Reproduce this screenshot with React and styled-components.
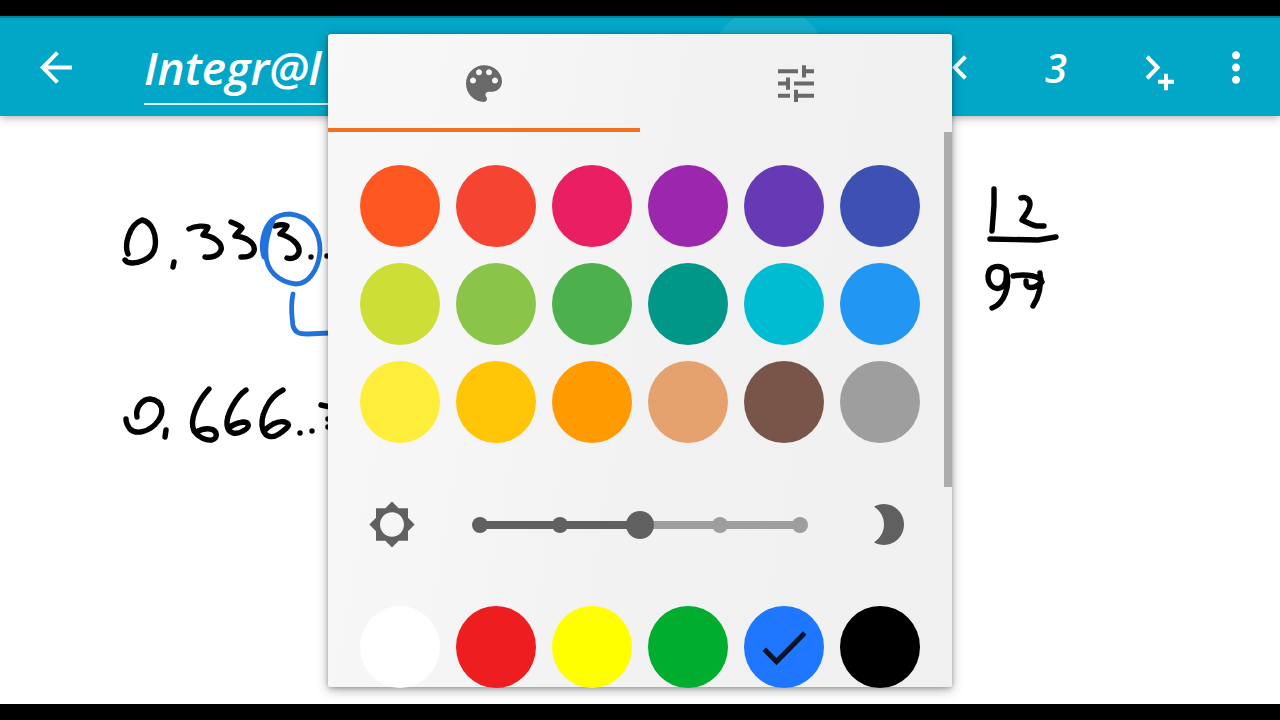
import React, { useState } from 'react';
import styled, { createGlobalStyle } from 'styled-components'

const GlobalStyle = createGlobalStyle`
  * {
    box-sizing: border-box;
  }
  body {
    margin: 0;
    background-color: #000;
    font-family: "Open Sans", "Noto Sans", sans-serif;
  }
  button {
    padding: 0;
    border: 0;
    background: none;
    font: inherit;
    color: inherit;
    cursor: pointer;
  }
`;

const Screen = styled.div`
  position: relative;
  display: flex;
  flex-direction: column;
  min-height: 100vh;
  padding: 16px 0;
  overflow: hidden;
`;

const Toolbar = styled.header`
  position: relative;
  z-index: 1;
  display: flex;
  align-items: stretch;
  height: 100px;
  padding-right: 8px;
  overflow: hidden;
  border-top: 2px solid #058296;
  background-color: #02a6c6;
  color: #fff;
  box-shadow: 0 2px 8px rgba(60, 30, 30, 0.35);
`;

const ToolButton = styled.button`
  display: flex;
  align-items: center;
  justify-content: center;
  width: ${(p) => p.$width || 96}px;
  font-size: 40px;
  font-style: italic;
  font-weight: 600;
`;

const Ripple = styled.span`
  flex: none;
  align-self: center;
  width: 120px;
  height: 120px;
  margin-right: 83px;
  border-radius: 50%;
  background-color: rgba(255, 255, 255, 0.08);
`;

const TitleField = styled.input`
  flex: 1;
  min-width: 0;
  margin: 0 48px 11px 32px;
  padding: 12px 0 0;
  border: 0;
  border-bottom: 2px solid #d9f6fb;
  border-radius: 0;
  outline: 0;
  background: none;
  color: #fff;
  font: italic 600 46px "Open Sans", "Noto Sans", sans-serif;
`;

const Canvas = styled.main`
  flex: 1;
  display: flex;
  background-color: #fff;
`;

const Ink = styled.svg`
  flex: 1;
  min-width: 0;
  fill: none;
  stroke-linecap: round;
  stroke-linejoin: round;
`;

const Overlay = styled.div`
  position: absolute;
  z-index: 2;
  top: 34px;
  left: 0;
  right: 0;
  display: flex;
  justify-content: center;
`;

const Dialog = styled.section`
  position: relative;
  width: 624px;
  max-width: 100%;
  border-radius: 3px;
  background: linear-gradient(100deg, #f8f8f8 0%, #f6f6f6 25%, #f2f2f2 50%, #f0f0f0 100%);
  box-shadow: 0 3px 12px rgba(0, 0, 0, 0.3), 0 1px 4px rgba(0, 0, 0, 0.25);
`;

const Tabs = styled.div`
  display: flex;
`;

const Tab = styled.button`
  flex: 1;
  display: flex;
  align-items: center;
  justify-content: center;
  height: 98px;
  padding-top: 4px;
  border-bottom: 4px solid ${(p) => (p.$active ? '#f36f21' : 'transparent')};
  color: #696969;
`;

const Body = styled.div`
  padding: 33px 32px 0;
`;

const Swatches = styled.div`
  display: grid;
  grid-template-columns: repeat(6, 1fr);
  gap: 16px;
  /* the last row runs over the edge of the dialog */
  margin-bottom: ${(p) => (p.$last ? -1 : 0)}px;
`;

const Swatch = styled.button`
  display: flex;
  align-items: center;
  justify-content: center;
  height: 82px;
  border-radius: 50%;
  background-color: ${(p) => p.$color};
  color: #07132b;
`;

const Brightness = styled.div`
  display: flex;
  align-items: center;
  justify-content: space-between;
  height: 163px;
  padding: 0 8px;
  color: #606060;
`;

const Slider = styled.label`
  position: relative;
  display: flex;
  align-items: center;
  justify-content: space-between;
  width: 336px;
  height: 28px;
`;

const Track = styled.span`
  position: absolute;
  top: 10px;
  left: 8px;
  right: 8px;
  height: 8px;
  background: linear-gradient(90deg, #606060 50%, #9e9e9e 50%);
`;

const Stop = styled.span`
  position: relative;
  width: 16px;
  height: 16px;
  border-radius: 50%;
  background-color: ${(p) => (p.$on ? '#606060' : '#9e9e9e')};
`;

const Range = styled.input`
  position: absolute;
  inset: 0;
  width: 100%;
  height: 28px;
  margin: 0;
  appearance: none;
  background: none;
  &::-webkit-slider-thumb {
    appearance: none;
    width: 28px;
    height: 28px;
    border-radius: 50%;
    background-color: #606060;
  }
`;

const ScrollThumb = styled.div`
  position: absolute;
  top: 98px;
  right: 0;
  width: 8px;
  height: 355px;
  background-color: #acacac;
`;

const palette = [
  '#ff5722', '#f64432', '#e91e63', '#9a27ac', '#663ab5', '#3d51b3',
  '#cddf37', '#8ac54a', '#4cb04d', '#009688', '#00bcd2', '#2196f3',
  '#ffee39', '#ffc506', '#ff9a00', '#e5a26e', '#785548', '#9e9e9e',
];

const recent = ['#ffffff', '#ee1d20', '#ffff00', '#00ad2e', '#1f76ff', '#000000'];

const blackInk = [
  'M128 254 C124 245 129 225 142 220 C152 222 157 235 155 247 C153 260 135 265 127 262 L125 260',
  'M174 262 L173 267',
  'M189 229 C196 225 205 226 208 227 C207 231 204 233 203 235 C213 236 223 243 221 250 C219 256 211 258 205 257',
  'M231 222 C236 224 241 226 242 228 C240 231 237 233 235 236 C246 237 256 243 254 251 C252 257 246 257 241 257',
  'M275 226 C281 224 285 225 287 226 C286 229 282 232 280 234 C291 237 300 244 299 252 C297 259 290 259 287 258',
  'M311 257 L311 257',
  'M327 256 L327 256',
  'M137 417 C135 407 143 399 150 399 C164 401 164 413 158 421 C150 432 136 435 130 429 C127 425 126 422 126 419',
  'M166 430 L165 437',
  'M209 389 C197 402 189 420 194 431 C198 437 206 441 212 440 C219 438 217 430 210 429 C204 428 200 430 196 432',
  'M246 390 C237 396 226 414 227 425 C228 434 236 435 243 431 C251 427 249 422 243 422 C236 423 231 426 229 428',
  'M283 390 C268 397 259 418 263 430 C266 438 273 438 279 434 C289 427 291 424 285 422 C276 420 268 427 264 431',
  'M300 433 L300 433',
  'M312 431 L312 431',
  'M321 405 L330 407',
  'M328 419 L328 419',
  'M328 427 L328 427',
  'M994 189 L994 205 L992 231',
  'M1021 198 C1026 196 1030 200 1030 204 C1030 211 1024 216 1022 220 C1028 223 1034 226 1037 226 L1044 226',
  'M990 239 L1038 240 L1056 237',
  'M1006 270 C1001 265 989 264 988 276 C988 285 994 290 1000 288 C1006 286 1007 278 1006 270 C1011 286 1004 304 992 308',
  'M1013 276 C1022 274 1034 275 1041 279',
  'M1026 281 C1025 290 1035 289 1042 282',
  'M1040 273 C1042 288 1037 300 1033 306',
];

const blueInk = [
  'M264 257 C260 246 263 229 272 220 C278 215 284 214 290 214 C310 216 320 232 320 250 C319 270 308 284 296 284 C278 282 266 270 266 254 C265 243 269 229 273 221',
  'M293 294 C290 308 292 316 293 326 C295 333 300 334 307 334 L330 333',
];

const icons = {
  back: 'M20 11H7.83l5.59-5.59L12 4l-8 8 8 8 1.41-1.41L7.83 13H20v-2z',
  prev: 'M15.41 7.41L14 6l-6 6 6 6 1.41-1.41L10.83 12z',
  next: 'M10.2 6L8.8 7.41 13.37 12 8.8 16.59 10.2 18l6-6zM18 15h2v3h3v2h-3v3.2h-2V20h-3v-2h3z',
  more: 'M12 8c1.1 0 2-.9 2-2s-.9-2-2-2-2 .9-2 2 .9 2 2 2zm0 2c-1.1 0-2 .9-2 2s.9 2 2 2 2-.9 2-2-.9-2-2-2zm0 6c-1.1 0-2 .9-2 2s.9 2 2 2 2-.9 2-2-.9-2-2-2z',
  palette: 'M12 3c-4.97 0-9 4.03-9 9s4.03 9 9 9c.83 0 1.5-.67 1.5-1.5 0-.39-.15-.74-.39-1.01-.23-.26-.38-.61-.38-.99 0-.83.67-1.5 1.5-1.5H16c2.76 0 5-2.24 5-5 0-4.42-4.03-8-9-8zm-5.5 9c-.83 0-1.5-.67-1.5-1.5S5.67 9 6.5 9 8 9.67 8 10.5 7.33 12 6.5 12zm3-4C8.67 8 8 7.33 8 6.5S8.67 5 9.5 5s1.5.67 1.5 1.5S10.33 8 9.5 8zm5 0c-.83 0-1.5-.67-1.5-1.5S13.67 5 14.5 5s1.5.67 1.5 1.5S15.33 8 14.5 8zm3 4c-.83 0-1.5-.67-1.5-1.5S16.67 9 17.5 9s1.5.67 1.5 1.5-.67 1.5-1.5 1.5z',
  tune: 'M3 17v2h6v-2H3zM3 5v2h10V5H3zm10 16v-2h8v-2h-8v-2h-2v6h2zM7 9v2H3v2h4v2h2V9H7zm14 4v-2H11v2h10zm-6-4h2V7h4V5h-4V3h-2v6z',
  sun: 'M20 8.69V4h-4.69L12 .69 8.69 4H4v4.69L.69 12 4 15.31V20h4.69L12 23.31 15.31 20H20v-4.69L23.31 12 20 8.69zM12 18c-3.31 0-6-2.69-6-6s2.69-6 6-6 6 2.69 6 6-2.69 6-6 6z',
  moon: 'M10 2c-1.82 0-3.53.5-5 1.35C7.99 5.08 10 8.3 10 12s-2.01 6.92-5 8.65C6.47 21.5 8.18 22 10 22c5.52 0 10-4.48 10-10S15.52 2 10 2z',
  check: 'M9 16.17L4.83 12l-1.42 1.41L9 19 21 7l-1.41-1.41z',
};

const Icon = ({ name, size = 48 }) => (
  <svg width={size} height={size + 1} viewBox="0 0 24 24" preserveAspectRatio="none" fill="currentColor" aria-hidden="true">
    <path d={icons[name]} />
  </svg>
);

const App = () => {
  const [title, setTitle] = useState('Integr@l')
  const [tab, setTab] = useState('palette')
  const [color, setColor] = useState('#1f76ff')
  const [level, setLevel] = useState(2)

  const renderSwatch = (item) => (
    <Swatch key={item} $color={item} aria-label={item} onClick={() => setColor(item)}>
      {color === item && <Icon name="check" size={60} />}
    </Swatch>
  );

  return (
    <Screen>
      <GlobalStyle />
      <Toolbar>
        <ToolButton $width={112} aria-label="Back"><Icon name="back" /></ToolButton>
        <TitleField aria-label="Title" value={title} onChange={(e) => setTitle(e.target.value)} />
        <Ripple />
        <ToolButton aria-label="Previous page"><Icon name="prev" /></ToolButton>
        <ToolButton>3</ToolButton>
        <ToolButton aria-label="Add page"><Icon name="next" /></ToolButton>
        <ToolButton $width={72} aria-label="More"><Icon name="more" /></ToolButton>
      </Toolbar>

      <Canvas>
        <Ink aria-hidden="true">
          <g transform="translate(0 -116)">
            <g stroke="#000" strokeWidth="5.4">
              {blackInk.map((d) => <path key={d} d={d} />)}
            </g>
            <g stroke="#2272dc" strokeWidth="4.8">
              {blueInk.map((d) => <path key={d} d={d} />)}
            </g>
          </g>
        </Ink>
      </Canvas>

      <Overlay>
        <Dialog role="dialog" aria-label="Color">
          <Tabs role="tablist">
            {['palette', 'tune'].map((name) => (
              <Tab key={name} role="tab" aria-label={name} aria-selected={tab === name} $active={tab === name} onClick={() => setTab(name)}>
                <Icon name={name} />
              </Tab>
            ))}
          </Tabs>
          <Body>
            <Swatches>{palette.map(renderSwatch)}</Swatches>
            <Brightness>
              <Icon name="sun" />
              <Slider>
                <Track />
                {[0, 1, 2, 3, 4].map((n) => <Stop key={n} $on={n <= level} />)}
                <Range type="range" min="0" max="4" aria-label="Brightness" value={level} onChange={(e) => setLevel(Number(e.target.value))} />
              </Slider>
              <Icon name="moon" />
            </Brightness>
            <Swatches $last>{recent.map(renderSwatch)}</Swatches>
          </Body>
          <ScrollThumb />
        </Dialog>
      </Overlay>
    </Screen>
  )
}
export default App;
